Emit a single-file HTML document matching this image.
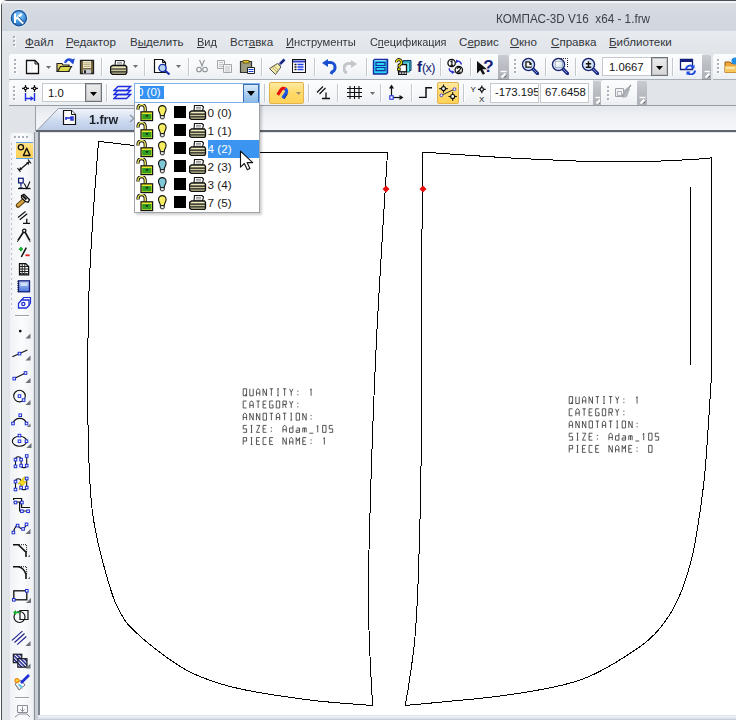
<!DOCTYPE html>
<html><head><meta charset="utf-8">
<style>
*{margin:0;padding:0;box-sizing:border-box}
html,body{width:736px;height:720px;overflow:hidden;background:#fff}
body{position:relative;font-family:"Liberation Sans",sans-serif;font-size:12px;color:#1e1e1e}
.a{position:absolute}
u{text-decoration:underline;text-underline-offset:1px}
</style></head><body>
<div class="a" style="left:0px;top:0px;width:736px;height:720px;background:#fff"></div>
<div class="a" style="left:1px;top:0px;width:740px;height:725px;background:#e1e4e8;border-top:1px solid #4a4e55;border-left:1px solid #4a4e55;border-top-left-radius:6px"></div>
<div class="a" style="left:2px;top:1px;width:736px;height:2px;background:#f2f4f7;border-top-left-radius:5px"></div>
<div class="a" style="left:2px;top:3px;width:736px;height:28px;background:linear-gradient(#d9dde3,#d3d8df 50%,#d1d7de)"></div>
<svg class="a" style="left:8px;top:7px" width="22" height="22" viewBox="0 0 22 22"><defs><radialGradient id="lgb" cx=".5" cy=".35" r=".7"><stop offset="0" stop-color="#8fd6fb"/><stop offset=".6" stop-color="#3f92dc"/><stop offset="1" stop-color="#1d5aa6"/></radialGradient></defs><circle cx="11" cy="11.2" r="9.6" fill="#d8ecfa" opacity=".6"/><circle cx="10.9" cy="11.2" r="7.6" fill="url(#lgb)" stroke="#1a4f98" stroke-width="1.2"/><path d="M7 6.5v9.5" stroke="#fff" stroke-width="2"/><path d="M8 12L13.8 6.8" stroke="#fff" stroke-width="2.2"/><path d="M9.6 10.4l5.6 6" stroke="#fff" stroke-width="2.2"/><path d="M10.4 9.6l5.4 5.8" stroke="#123f80" stroke-width="1"/></svg>
<div class="a" style="left:496px;top:12px;white-space:pre;font-size:12px;color:#3b4047;transform-origin:0 0;transform:scaleX(.975)">КОМПАС-3D V16  x64 - 1.frw</div>
<div class="a" style="left:2px;top:31px;width:736px;height:23px;background:linear-gradient(#e8ebef,#e0e4e9)"></div>
<div class="a" style="left:13px;top:36px;width:2px;height:2px;background:#aab1bb;box-shadow:1px 1px 0 #fff"></div>
<div class="a" style="left:13px;top:40px;width:2px;height:2px;background:#aab1bb;box-shadow:1px 1px 0 #fff"></div>
<div class="a" style="left:13px;top:44px;width:2px;height:2px;background:#aab1bb;box-shadow:1px 1px 0 #fff"></div>
<div class="a" style="left:25px;top:35px;white-space:pre;font-size:11.6px;color:#33373d;transform-origin:0 0;transform:scaleX(1)"><u>Ф</u>айл</div>
<div class="a" style="left:66px;top:35px;white-space:pre;font-size:11.6px;color:#33373d;transform-origin:0 0;transform:scaleX(1)"><u>Р</u>едактор</div>
<div class="a" style="left:130px;top:35px;white-space:pre;font-size:11.6px;color:#33373d;transform-origin:0 0;transform:scaleX(1)">В<u>ы</u>делить</div>
<div class="a" style="left:197px;top:35px;white-space:pre;font-size:11.6px;color:#33373d;transform-origin:0 0;transform:scaleX(0.95)"><u>В</u>ид</div>
<div class="a" style="left:230px;top:35px;white-space:pre;font-size:11.6px;color:#33373d;transform-origin:0 0;transform:scaleX(1)">Вст<u>а</u>вка</div>
<div class="a" style="left:286px;top:35px;white-space:pre;font-size:11.6px;color:#33373d;transform-origin:0 0;transform:scaleX(0.965)"><u>И</u>нструменты</div>
<div class="a" style="left:370px;top:35px;white-space:pre;font-size:11.6px;color:#33373d;transform-origin:0 0;transform:scaleX(0.94)">С<u>п</u>ецификация</div>
<div class="a" style="left:459px;top:35px;white-space:pre;font-size:11.6px;color:#33373d;transform-origin:0 0;transform:scaleX(1)">С<u>е</u>рвис</div>
<div class="a" style="left:510px;top:35px;white-space:pre;font-size:11.6px;color:#33373d;transform-origin:0 0;transform:scaleX(1)"><u>О</u>кно</div>
<div class="a" style="left:551px;top:35px;white-space:pre;font-size:11.6px;color:#33373d;transform-origin:0 0;transform:scaleX(1)"><u>С</u>правка</div>
<div class="a" style="left:609px;top:35px;white-space:pre;font-size:11.6px;color:#33373d;transform-origin:0 0;transform:scaleX(1)"><u>Б</u>иблиотеки</div>
<div class="a" style="left:9px;top:54px;width:490px;height:26px;background:linear-gradient(#fbfcfd,#f5f7f9 55%,#eceff3);border-radius:3px 0 0 0;box-shadow:inset 0 -1px 0 #a9afb7"></div>
<div class="a" style="left:498px;top:55px;width:11px;height:25px;background:linear-gradient(#c9ccd1,#b9bdc3 45%,#adb1b7);border-radius:0 2px 0 0;box-shadow:inset 0 -1px 0 #8f949b"></div>
<svg class="a" style="left:499px;top:70px" width="9" height="9" viewBox="0 0 9 9"><path d="M1.5 1.5h6" stroke="#fff" stroke-width="1.4"/><path d="M2.5 7.5l4-4" stroke="#fff" stroke-width="2"/><path d="M5.5 7.5l2-2" stroke="#555" stroke-width="1"/></svg>
<div class="a" style="left:509px;top:54px;width:194px;height:26px;background:linear-gradient(#fbfcfd,#f5f7f9 55%,#eceff3);border-radius:3px 0 0 0;box-shadow:inset 0 -1px 0 #a9afb7"></div>
<div class="a" style="left:702px;top:55px;width:9px;height:25px;background:linear-gradient(#c9ccd1,#b9bdc3 45%,#adb1b7);border-radius:0 2px 0 0;box-shadow:inset 0 -1px 0 #8f949b"></div>
<svg class="a" style="left:703px;top:70px" width="7" height="9" viewBox="0 0 7 9"><path d="M1.5 1.5h6" stroke="#fff" stroke-width="1.4"/><path d="M2.5 7.5l4-4" stroke="#fff" stroke-width="2"/><path d="M5.5 7.5l2-2" stroke="#555" stroke-width="1"/></svg>
<div class="a" style="left:713px;top:54px;width:30px;height:26px;background:linear-gradient(#fbfcfd,#f5f7f9 55%,#eceff3);border-radius:3px 0 0 0;box-shadow:inset 0 -1px 0 #a9afb7"></div>
<div class="a" style="left:14px;top:59px;width:2px;height:2px;background:#aab1bb;box-shadow:1px 1px 0 #fff"></div>
<div class="a" style="left:14px;top:63px;width:2px;height:2px;background:#aab1bb;box-shadow:1px 1px 0 #fff"></div>
<div class="a" style="left:14px;top:67px;width:2px;height:2px;background:#aab1bb;box-shadow:1px 1px 0 #fff"></div>
<div class="a" style="left:14px;top:71px;width:2px;height:2px;background:#aab1bb;box-shadow:1px 1px 0 #fff"></div>
<div class="a" style="left:514px;top:59px;width:2px;height:2px;background:#aab1bb;box-shadow:1px 1px 0 #fff"></div>
<div class="a" style="left:514px;top:63px;width:2px;height:2px;background:#aab1bb;box-shadow:1px 1px 0 #fff"></div>
<div class="a" style="left:514px;top:67px;width:2px;height:2px;background:#aab1bb;box-shadow:1px 1px 0 #fff"></div>
<div class="a" style="left:514px;top:71px;width:2px;height:2px;background:#aab1bb;box-shadow:1px 1px 0 #fff"></div>
<div class="a" style="left:717px;top:59px;width:2px;height:2px;background:#aab1bb;box-shadow:1px 1px 0 #fff"></div>
<div class="a" style="left:717px;top:63px;width:2px;height:2px;background:#aab1bb;box-shadow:1px 1px 0 #fff"></div>
<div class="a" style="left:717px;top:67px;width:2px;height:2px;background:#aab1bb;box-shadow:1px 1px 0 #fff"></div>
<div class="a" style="left:717px;top:71px;width:2px;height:2px;background:#aab1bb;box-shadow:1px 1px 0 #fff"></div>
<div class="a" style="left:101px;top:58px;width:1px;height:18px;background:#c3c8cf;box-shadow:1px 0 0 #fff"></div>
<div class="a" style="left:144px;top:58px;width:1px;height:18px;background:#c3c8cf;box-shadow:1px 0 0 #fff"></div>
<div class="a" style="left:188px;top:58px;width:1px;height:18px;background:#c3c8cf;box-shadow:1px 0 0 #fff"></div>
<div class="a" style="left:261px;top:58px;width:1px;height:18px;background:#c3c8cf;box-shadow:1px 0 0 #fff"></div>
<div class="a" style="left:314px;top:58px;width:1px;height:18px;background:#c3c8cf;box-shadow:1px 0 0 #fff"></div>
<div class="a" style="left:366px;top:58px;width:1px;height:18px;background:#c3c8cf;box-shadow:1px 0 0 #fff"></div>
<div class="a" style="left:440px;top:58px;width:1px;height:18px;background:#c3c8cf;box-shadow:1px 0 0 #fff"></div>
<div class="a" style="left:470px;top:58px;width:1px;height:18px;background:#c3c8cf;box-shadow:1px 0 0 #fff"></div>
<div class="a" style="left:545px;top:58px;width:1px;height:18px;background:#c3c8cf;box-shadow:1px 0 0 #fff"></div>
<div class="a" style="left:575px;top:58px;width:1px;height:18px;background:#c3c8cf;box-shadow:1px 0 0 #fff"></div>
<div class="a" style="left:672px;top:58px;width:1px;height:18px;background:#c3c8cf;box-shadow:1px 0 0 #fff"></div>
<svg class="a" style="left:25px;top:59px" width="15" height="16" viewBox="0 0 15 16"><path d="M1.5 1.5h8.5l3.5 3.5v9.5h-12z" fill="#fff" stroke="#111" stroke-width="1.3"/><path d="M10 1.5v3.5h3.5" fill="none" stroke="#111" stroke-width="1"/><path d="M4 4v9M7 4v9" stroke="#e6e9f4" stroke-width="1"/></svg>
<svg class="a" style="left:46px;top:66px" width="5" height="3" viewBox="0 0 5 3"><path d="M0 0h5L2.5 3z" fill="#6b6f75"/></svg>
<svg class="a" style="left:56px;top:57px" width="19" height="16" viewBox="0 0 19 16"><path d="M1 6.5h5l1 1.5h6v6.5H1z" fill="#e9d36a" stroke="#222" stroke-width="1.2"/><path d="M1.5 14.5l3-5h11l-3 5z" fill="#d8d84a" stroke="#222" stroke-width="1.2"/><path d="M9 5.8Q11 1 15.5 2.8" fill="none" stroke="#1e46d8" stroke-width="2.2"/><path d="M12.8 3.2L18.8 1.6 17.2 7.6z" fill="#1e46d8"/></svg>
<svg class="a" style="left:79px;top:59px" width="16" height="16" viewBox="0 0 16 16"><path d="M1.5 1.5h13v13h-13z" fill="#7a6a40" stroke="#222" stroke-width="1.3"/><path d="M4 2h8v7H4z" fill="#f2ead0"/><path d="M4.5 3.8h7M4.5 5.6h7M4.5 7.4h7" stroke="#a89868" stroke-width=".8"/><path d="M4 10.5h8v4H4z" fill="#c9ccd2"/><path d="M5 11.3h2v3H5z" fill="#222"/></svg>
<svg class="a" style="left:110px;top:60px" width="18" height="15" viewBox="0 0 18 15"><path d="M5.5 .5h8l1 1-1 4.5H5z" fill="#fff" stroke="#222" stroke-width="1.1"/><path d="M7 2.3h5M7 3.9h5" stroke="#666" stroke-width=".7"/><path d="M2.5 5.5h13l1.3 1.5v5.5l-1.3 2h-13l-2-2V7z" fill="#c9c596" stroke="#111" stroke-width="1.3"/><path d="M.8 9h16M.8 11.8h16" stroke="#222" stroke-width="1.2"/><path d="M2.5 7.3h12.5" stroke="#f6f2cf" stroke-width="1"/></svg>
<svg class="a" style="left:133px;top:65px" width="5" height="3" viewBox="0 0 5 3"><path d="M0 0h5L2.5 3z" fill="#6b6f75"/></svg>
<svg class="a" style="left:153px;top:58px" width="19" height="17" viewBox="0 0 19 17"><path d="M1.5 1.5h8l3 3v10h-11z" fill="#fff" stroke="#111" stroke-width="1.2"/><path d="M9.5 1.5v3h3" fill="none" stroke="#111"/><circle cx="9.5" cy="10" r="3.6" fill="#bcd6f2" stroke="#1a2fa8" stroke-width="1.4"/><path d="M12 12.5l4.5 4" stroke="#1a2fa8" stroke-width="2.2"/></svg>
<svg class="a" style="left:176px;top:65px" width="5" height="3" viewBox="0 0 5 3"><path d="M0 0h5L2.5 3z" fill="#6b6f75"/></svg>
<svg class="a" style="left:196px;top:59px" width="12" height="14" viewBox="0 0 12 14"><path d="M3.5 1l3 6.5M8.5 1l-3 6.5" stroke="#8f9499" stroke-width="1.1" fill="none"/><circle cx="3" cy="10.5" r="2.3" fill="none" stroke="#8f9499" stroke-width="1.1"/><circle cx="9" cy="10.5" r="2.3" fill="none" stroke="#8f9499" stroke-width="1.1"/></svg>
<svg class="a" style="left:216px;top:60px" width="17" height="13" viewBox="0 0 17 13"><path d="M1.5 .5h7v8h-7z" fill="#f4f4f4" stroke="#a3a6aa"/><path d="M3 2.5h4M3 4.5h4M3 6.5h4" stroke="#b5b8bc" stroke-width=".8"/><path d="M7.5 4.5h8v8h-8z" fill="#f4f4f4" stroke="#a3a6aa"/><path d="M9 7h5M9 9h5M9 11h5" stroke="#b5b8bc" stroke-width=".8"/></svg>
<svg class="a" style="left:239px;top:59px" width="17" height="15" viewBox="0 0 17 15"><path d="M1.5 2.5h11v11h-11z" fill="#9d9c80" stroke="#333" stroke-width="1.2"/><path d="M4 1.5h6v2.5H4z" fill="#f0c830" stroke="#6b5a10" stroke-width="1"/><path d="M8.5 8.5h7v6h-7z" fill="#fff" stroke="#222" stroke-width="1"/><path d="M9.5 10.5h5M9.5 12.5h5" stroke="#1f3fd0" stroke-width="1"/></svg>
<svg class="a" style="left:268px;top:58px" width="18" height="17" viewBox="0 0 18 17"><path d="M16.5 1.5l-6 6" stroke="#1b2a8a" stroke-width="2.6"/><path d="M11.5 5l2 2-2 1.5-2-2z" fill="#8a9ab0"/><path d="M9.5 5.5l3.5 3.5-5.5 7.5-6-6z" fill="#f4e9a8" stroke="#555" stroke-width="1"/><path d="M4 9l5 5M5.5 7.5l5 5" stroke="#a9a060" stroke-width=".8"/></svg>
<svg class="a" style="left:292px;top:59px" width="14" height="14" viewBox="0 0 14 14"><path d="M.5 .5h13v13H.5z" fill="#fff" stroke="#111" stroke-width="1.1"/><path d="M1 1.5h12v2H1z" fill="#3040c8"/><path d="M2.5 5.5h2M2.5 8h2M2.5 10.5h2" stroke="#111" stroke-width="1.4"/><path d="M5.5 5.5h6M5.5 8h6M5.5 10.5h6" stroke="#1f3fe0" stroke-width="1.4"/></svg>
<svg class="a" style="left:321px;top:59px" width="16" height="16" viewBox="0 0 16 16"><path d="M7 3.5h2.5a4.5 4.5 0 0 1 4.5 4.5v1a4.5 4.5 0 0 1-3 4l-1 2" fill="none" stroke="#1a4fd0" stroke-width="3"/><path d="M1 4l6-4v8z" fill="#1a4fd0"/></svg>
<svg class="a" style="left:343px;top:60px" width="15" height="14" viewBox="0 0 15 14"><path d="M8 3.5H5.5A4.5 4.5 0 0 0 1 8v1a4.5 4.5 0 0 0 3 4" fill="none" stroke="#c3c6ca" stroke-width="3"/><path d="M14 4L8 0v8z" fill="#c3c6ca"/></svg>
<svg class="a" style="left:372px;top:58px" width="17" height="17" viewBox="0 0 17 17"><path d="M.8 2.2L2.5.8h13.7v14.5l-1.6 1.4H.8z" fill="#1a2aa0"/><path d="M2.2 2.2h12.4v13H2.2z" fill="#27d6f2"/><path d="M4 4.3h9v3.2H4zM4 9.5h9v3.2H4z" fill="#27d6f2" stroke="#1a2aa0" stroke-width="1.2"/><path d="M2.6 2.6h11.5" stroke="#a8f2ff" stroke-width=".8"/></svg>
<svg class="a" style="left:394px;top:58px" width="18" height="18" viewBox="0 0 18 18"><path d="M9.5 2.5h7.5v10h-7.5z" fill="#2ac8e0" stroke="#1b2f6a" stroke-width="1"/><path d="M8 4h7.5v10H8z" fill="#6fe6f4" stroke="#197a8a" stroke-width="1"/><path d="M4.5 6.5h8v7.5h-8z" fill="#fff" stroke="#111" stroke-width="1.3"/><path d="M4 13.5h9v3.5H4z" fill="#111"/><path d="M5.2 14.6h2v1.2h-2zM7.8 14.6h2v1.2h-2zM10.4 14.6h2v1.2h-2z" fill="#fff"/><path d="M2.3 4.2a2.6 2.6 0 1 1 3.9 2.3c-.9.6-1.3 1-1.3 2.3" fill="none" stroke="#111" stroke-width="3"/><path d="M2.3 4.2a2.6 2.6 0 1 1 3.9 2.3c-.9.6-1.3 1-1.3 2.3" fill="none" stroke="#f6e400" stroke-width="1.4"/><rect x="3.6" y="10" width="2.6" height="2.4" fill="#f6e400" stroke="#111" stroke-width=".8"/></svg>
<div class="a" style="left:417px;top:58px;white-space:pre;color:#131c72"><b style="font-size:15px">f</b><span style="font-size:12.5px;letter-spacing:-.6px">(x)</span></div>
<svg class="a" style="left:447px;top:58px" width="18" height="18" viewBox="0 0 18 18"><circle cx="4.6" cy="5" r="3.7" fill="#fff" stroke="#111" stroke-width="1.3"/><path d="M3.5 3.9l1.4-1v4.3M3.3 7.3h3" fill="none" stroke="#111" stroke-width="1.2"/><circle cx="11.8" cy="12" r="3.7" fill="#fff" stroke="#111" stroke-width="1.3"/><path d="M10.1 10.9q.3-1.6 1.8-1.6 1.7 0 1.6 1.5-.1 1-3.4 3.4h3.6" fill="none" stroke="#111" stroke-width="1.2"/><path d="M10 3.2q3.5-.5 4.5 3.3" fill="none" stroke="#2a2fd0" stroke-width="1.4"/><path d="M9 1.5l3 1.8-3 1.9z" fill="#2a2fd0"/><path d="M2.2 10.2q.2 3.8 4.2 4" fill="none" stroke="#2a2fd0" stroke-width="1.4"/><path d="M7.8 14.2l-3 1.8v-3.7z" fill="#2a2fd0"/></svg>
<svg class="a" style="left:476px;top:59px" width="18" height="16" viewBox="0 0 18 16"><path d="M1 2v12.5l3.2-3.2 2.6 4.5 2.2-1.2-2.5-4.3h4.5z" fill="#111"/><text x="7.2" y="13" font-family="Liberation Sans" font-weight="bold" font-size="17" fill="#16227a">?</text></svg>
<svg class="a" style="left:521px;top:57px" width="18" height="18" viewBox="0 0 18 18"><defs><radialGradient id="mg" cx=".4" cy=".35" r=".7"><stop offset="0" stop-color="#fff"/><stop offset="1" stop-color="#b9d2f0"/></radialGradient></defs><path d="M11.5 11.5l5 5" stroke="#1c2a80" stroke-width="3.2" stroke-linecap="round"/><path d="M12 12l4 4" stroke="#7f8fd8" stroke-width="1"/><circle cx="7.5" cy="7.5" r="6" fill="url(#mg)" stroke="#1a2470" stroke-width="1.5"/><circle cx="7.5" cy="7.5" r="4.6" fill="none" stroke="#cfe0f7" stroke-width="1"/><path d="M4.3 4.3h4.2l2 2v4.5H4.3z" fill="#111"/><path d="M5.6 5.6h2.2l.6.6v1.9h2v1.5H5.6z" fill="#fff"/></svg>
<svg class="a" style="left:551px;top:57px" width="18" height="18" viewBox="0 0 18 18"><defs><radialGradient id="mg" cx=".4" cy=".35" r=".7"><stop offset="0" stop-color="#fff"/><stop offset="1" stop-color="#b9d2f0"/></radialGradient></defs><path d="M11.5 11.5l5 5" stroke="#1c2a80" stroke-width="3.2" stroke-linecap="round"/><path d="M12 12l4 4" stroke="#7f8fd8" stroke-width="1"/><circle cx="7.5" cy="7.5" r="6" fill="url(#mg)" stroke="#1a2470" stroke-width="1.5"/><circle cx="7.5" cy="7.5" r="4.6" fill="none" stroke="#cfe0f7" stroke-width="1"/><path d="M8 1.5h8.5v9" fill="none" stroke="#222" stroke-width="1" stroke-dasharray="1 1"/><path d="M4.5 4.5h7v6h-7z" fill="none" stroke="#333" stroke-width=".8" stroke-dasharray="1 1" opacity=".7"/></svg>
<svg class="a" style="left:581px;top:57px" width="18" height="18" viewBox="0 0 18 18"><defs><radialGradient id="mg" cx=".4" cy=".35" r=".7"><stop offset="0" stop-color="#fff"/><stop offset="1" stop-color="#b9d2f0"/></radialGradient></defs><path d="M11.5 11.5l5 5" stroke="#1c2a80" stroke-width="3.2" stroke-linecap="round"/><path d="M12 12l4 4" stroke="#7f8fd8" stroke-width="1"/><circle cx="7.5" cy="7.5" r="6" fill="url(#mg)" stroke="#1a2470" stroke-width="1.5"/><circle cx="7.5" cy="7.5" r="4.6" fill="none" stroke="#cfe0f7" stroke-width="1"/><path d="M4.8 6.8h5.4M7.5 4.2v5.2M4.8 10.2h5.4" stroke="#111" stroke-width="1.5"/></svg>
<div class="a" style="left:602px;top:57px;width:66px;height:19px;background:#fff;border:1px solid #c5c9cf"></div>
<div class="a" style="left:651px;top:57px;width:17px;height:19px;background:linear-gradient(#ececec,#d6d6d6);border:1px solid #6f7277;box-shadow:inset 0 0 0 1px #bfc2c6"></div>
<svg class="a" style="left:656px;top:66px" width="7" height="4" viewBox="0 0 7 4"><path d="M0 0h7L3.5 4z" fill="#000"/></svg>
<div class="a" style="left:609px;top:61px;white-space:pre;font-size:11.3px;color:#141414">1.0667</div>
<svg class="a" style="left:679px;top:58px" width="18" height="17" viewBox="0 0 18 17"><path d="M1.5 1.5h12v10h-12z" fill="#fff" stroke="#14207a" stroke-width="1.3"/><path d="M1.5 1.5h12v2.5h-12z" fill="#14207a"/><path d="M7 11.5a4 4 0 0 1 7-2.5" fill="none" stroke="#1f4ce0" stroke-width="2"/><path d="M15.5 6.5v4h-4z" fill="#1f4ce0"/><path d="M16 12.5a4 4 0 0 1-7 2.5" fill="none" stroke="#1f4ce0" stroke-width="2"/><path d="M7.5 17.5v-4h4z" fill="#1f4ce0"/></svg>
<svg class="a" style="left:724px;top:57px" width="12" height="18" viewBox="0 0 12 18"><path d="M1 5h5l1 1.5h6v9H1z" fill="#f2a63a" stroke="#9a5a10" stroke-width="1"/><path d="M1 9h12v6.5H1z" fill="#f8c860"/><path d="M2 11h9" stroke="#fff" stroke-width="1"/><circle cx="11" cy="4" r="3.6" fill="#1f8ee0"/></svg>
<div class="a" style="left:9px;top:80px;width:584px;height:26px;background:linear-gradient(#fbfcfd,#f5f7f9 55%,#eceff3);border-radius:3px 0 0 0;box-shadow:inset 0 -1px 0 #a9afb7"></div>
<div class="a" style="left:593px;top:81px;width:8px;height:25px;background:linear-gradient(#c9ccd1,#b9bdc3 45%,#adb1b7);border-radius:0 2px 0 0;box-shadow:inset 0 -1px 0 #8f949b"></div>
<svg class="a" style="left:594px;top:96px" width="6" height="9" viewBox="0 0 6 9"><path d="M1.5 1.5h6" stroke="#fff" stroke-width="1.4"/><path d="M2.5 7.5l4-4" stroke="#fff" stroke-width="2"/><path d="M5.5 7.5l2-2" stroke="#555" stroke-width="1"/></svg>
<div class="a" style="left:601px;top:80px;width:37px;height:26px;background:linear-gradient(#fbfcfd,#f5f7f9 55%,#eceff3);border-radius:3px 0 0 0;box-shadow:inset 0 -1px 0 #a9afb7"></div>
<div class="a" style="left:637px;top:81px;width:10px;height:25px;background:linear-gradient(#c9ccd1,#b9bdc3 45%,#adb1b7);border-radius:0 2px 0 0;box-shadow:inset 0 -1px 0 #8f949b"></div>
<svg class="a" style="left:638px;top:96px" width="8" height="9" viewBox="0 0 8 9"><path d="M1.5 1.5h6" stroke="#fff" stroke-width="1.4"/><path d="M2.5 7.5l4-4" stroke="#fff" stroke-width="2"/><path d="M5.5 7.5l2-2" stroke="#555" stroke-width="1"/></svg>
<div class="a" style="left:13px;top:86px;width:2px;height:2px;background:#aab1bb;box-shadow:1px 1px 0 #fff"></div>
<div class="a" style="left:13px;top:90px;width:2px;height:2px;background:#aab1bb;box-shadow:1px 1px 0 #fff"></div>
<div class="a" style="left:13px;top:94px;width:2px;height:2px;background:#aab1bb;box-shadow:1px 1px 0 #fff"></div>
<div class="a" style="left:13px;top:98px;width:2px;height:2px;background:#aab1bb;box-shadow:1px 1px 0 #fff"></div>
<div class="a" style="left:607px;top:86px;width:2px;height:2px;background:#aab1bb;box-shadow:1px 1px 0 #fff"></div>
<div class="a" style="left:607px;top:90px;width:2px;height:2px;background:#aab1bb;box-shadow:1px 1px 0 #fff"></div>
<div class="a" style="left:607px;top:94px;width:2px;height:2px;background:#aab1bb;box-shadow:1px 1px 0 #fff"></div>
<div class="a" style="left:607px;top:98px;width:2px;height:2px;background:#aab1bb;box-shadow:1px 1px 0 #fff"></div>
<div class="a" style="left:106px;top:84px;width:1px;height:18px;background:#c3c8cf;box-shadow:1px 0 0 #fff"></div>
<div class="a" style="left:264px;top:84px;width:1px;height:18px;background:#c3c8cf;box-shadow:1px 0 0 #fff"></div>
<div class="a" style="left:308px;top:84px;width:1px;height:18px;background:#c3c8cf;box-shadow:1px 0 0 #fff"></div>
<div class="a" style="left:337px;top:84px;width:1px;height:18px;background:#c3c8cf;box-shadow:1px 0 0 #fff"></div>
<div class="a" style="left:380px;top:84px;width:1px;height:18px;background:#c3c8cf;box-shadow:1px 0 0 #fff"></div>
<div class="a" style="left:411px;top:84px;width:1px;height:18px;background:#c3c8cf;box-shadow:1px 0 0 #fff"></div>
<div class="a" style="left:463px;top:84px;width:1px;height:18px;background:#c3c8cf;box-shadow:1px 0 0 #fff"></div>
<svg class="a" style="left:21px;top:84px" width="18" height="18" viewBox="0 0 18 18"><path d="M1.0 4.4h7.0M4.5 0.9000000000000004v7.0" stroke="#111" stroke-width="1.2"/><circle cx="4.5" cy="4.4" r="1.3" fill="#fff" stroke="#111" stroke-width="1.2"/><path d="M10.0 4.4h7.0M13.5 0.9000000000000004v7.0" stroke="#111" stroke-width="1.2"/><circle cx="13.5" cy="4.4" r="1.3" fill="#fff" stroke="#111" stroke-width="1.2"/><path d="M4.5 9v8M13.5 9v8M5 14.5h6" stroke="#1f2fe0" stroke-width="1.4" fill="none"/><path d="M13 14.5l-3.5-2.5v5z" fill="#1f2fe0"/></svg>
<div class="a" style="left:42px;top:83px;width:60px;height:19px;background:#fff;border:1px solid #c5c9cf"></div>
<div class="a" style="left:85px;top:83px;width:17px;height:19px;background:linear-gradient(#ececec,#d6d6d6);border:1px solid #6f7277;box-shadow:inset 0 0 0 1px #bfc2c6"></div>
<svg class="a" style="left:90px;top:92px" width="7" height="4" viewBox="0 0 7 4"><path d="M0 0h7L3.5 4z" fill="#000"/></svg>
<div class="a" style="left:48px;top:87px;white-space:pre;font-size:11.3px;color:#141414">1.0</div>
<svg class="a" style="left:113px;top:85px" width="19" height="15" viewBox="0 0 19 15"><path d="M5 1.5h12.5l-4 4H1z" fill="none" stroke="#1c2ee0" stroke-width="1.3"/><path d="M5 5.5h12.5l-4 4H1z" fill="none" stroke="#1c2ee0" stroke-width="1.3"/><path d="M5 9.5h12.5l-4 4H1z" fill="none" stroke="#1c2ee0" stroke-width="1.3"/></svg>
<div class="a" style="left:134px;top:83px;width:126px;height:20px;background:#fff;border:1px solid #7fb0e6"></div>
<div class="a" style="left:140px;top:86px;width:24px;height:13px;background:#3391f2"></div>
<div class="a" style="left:137px;top:86px;white-space:pre;font-size:11.5px;width:27px;overflow:hidden"><span style="color:#fff">0 (0)</span></div>
<div class="a" style="left:243px;top:84px;width:16px;height:19px;background:linear-gradient(#dcebfa,#a9cdf1 55%,#8dbbe8);border:1px solid #3a6cb3"></div>
<svg class="a" style="left:247px;top:91px" width="8" height="5" viewBox="0 0 8 5"><path d="M0 0h8L4 5z" fill="#000"/></svg>
<div class="a" style="left:269px;top:82px;width:35px;height:22px;background:linear-gradient(#ffeaa0,#ffd968 50%,#ffd35a);border:1px solid #e2b24e;border-radius:2px"></div>
<svg class="a" style="left:272px;top:83px" width="24" height="20" viewBox="0 0 24 20"><g transform="translate(11.6 8.3) rotate(33)"><path d="M-3 6.2V0A3 3 0 0 1 0 -3" fill="none" stroke="#e3140e" stroke-width="3.2"/><path d="M0 -3A3 3 0 0 1 3 0V6.2" fill="none" stroke="#1d55e8" stroke-width="3.2"/><path d="M4.6 0V6.2" stroke="#0a1a6a" stroke-width=".8"/></g></svg>
<svg class="a" style="left:296px;top:92px" width="5" height="3" viewBox="0 0 5 3"><path d="M0 0h5L2.5 3z" fill="#9b8f70"/></svg>
<svg class="a" style="left:315px;top:85px" width="16" height="15" viewBox="0 0 16 15"><path d="M2 7.5L8 1.5M4.5 9L10.5 3" stroke="#111" stroke-width="1.2"/><path d="M7 13.5h8M11 7.5v6" stroke="#111" stroke-width="1.3"/></svg>
<svg class="a" style="left:346px;top:85px" width="17" height="15" viewBox="0 0 17 15"><path d="M1 3.5h15M1 7.5h15M1 11.5h15M4 1v13M8.5 1v13M13 1v13" stroke="#111" stroke-width="1.1"/></svg>
<svg class="a" style="left:370px;top:92px" width="5" height="3" viewBox="0 0 5 3"><path d="M0 0h5L2.5 3z" fill="#6b6f75"/></svg>
<svg class="a" style="left:387px;top:84px" width="17" height="16" viewBox="0 0 17 16"><path d="M4.5 14V2" stroke="#111" stroke-width="1.2"/><path d="M4.5 .5L2 4.5h5z" fill="#111"/><path d="M4.5 13.5H15" stroke="#111" stroke-width="1.2"/><path d="M16.5 13.5L12.5 11v5z" fill="#111"/><rect x="2.8" y="11.8" width="3.4" height="3.4" fill="#fff" stroke="#1f2fe0" stroke-width="1.1"/></svg>
<svg class="a" style="left:419px;top:87px" width="13" height="11" viewBox="0 0 13 11"><path d="M0 10.5h7V.8h6" fill="none" stroke="#111" stroke-width="1.5"/></svg>
<div class="a" style="left:437px;top:82px;width:22px;height:22px;background:linear-gradient(#ffeaa0,#ffd968 50%,#ffd35a);border:1px solid #e2b24e;border-radius:2px"></div>
<svg class="a" style="left:438px;top:83px" width="20" height="20" viewBox="0 0 20 20"><path d="M1.2999999999999998 5.6h8.4M5.5 1.3999999999999995v8.4" stroke="#111" stroke-width="1.2"/><circle cx="5.5" cy="5.6" r="2" fill="#fff" stroke="#111" stroke-width="1.2"/><path d="M10.5 13.5h8.4M14.7 9.3v8.4" stroke="#111" stroke-width="1.2"/><circle cx="14.7" cy="13.5" r="2" fill="#fff" stroke="#111" stroke-width="1.2"/><path d="M3.4 12.3L16.5 6.2" stroke="#333" stroke-width="1"/><circle cx="3.4" cy="12.3" r="1.4" fill="#fff" stroke="#4b3fd0" stroke-width="1"/><circle cx="16.5" cy="6.2" r="1.4" fill="#fff" stroke="#4b3fd0" stroke-width="1"/></svg>
<svg class="a" style="left:469px;top:84px" width="19" height="19" viewBox="0 0 19 19"><text x="1.5" y="8" font-family="Liberation Sans" font-size="8" fill="#111">Y</text><text x="10" y="17.5" font-family="Liberation Sans" font-size="8" fill="#111">X</text><path d="M8.9 5.4h7.800000000000001M12.8 1.5v7.800000000000001" stroke="#111" stroke-width="1.2"/><circle cx="12.8" cy="5.4" r="1.7" fill="#fff" stroke="#111" stroke-width="1.2"/></svg>
<div class="a" style="left:490px;top:83px;width:49px;height:20px;background:#fff;border:1px solid #c5c9cf"></div>
<div class="a" style="left:540px;top:83px;width:49px;height:20px;background:#fff;border:1px solid #c5c9cf"></div>
<div class="a" style="left:491px;top:86px;width:47px;height:14px;overflow:hidden"><div style="position:absolute;left:4px;top:0;white-space:pre;font-size:11.3px;color:#141414">-173.195</div></div>
<div class="a" style="left:545px;top:86px;white-space:pre;font-size:11.3px;color:#141414">67.6458</div>
<svg class="a" style="left:614px;top:84px" width="19" height="16" viewBox="0 0 19 16"><path d="M1.5 4.5h8v8h-8z" fill="#f2f2f2" stroke="#9ea2a8" stroke-width="1"/><path d="M3.5 7.5h4v4h-4z" fill="none" stroke="#b0b4b9"/><path d="M8 12l9-11" stroke="#8f939a" stroke-width="1.2"/><path d="M9 7l5-4 2 2-3 8-4 1z" fill="#a7abb1" opacity=".85"/></svg>
<div class="a" style="left:2px;top:106px;width:736px;height:26px;background:#e0e3e8"></div>
<div class="a" style="left:9px;top:105px;width:730px;height:1px;background:#979da5"></div>
<div class="a" style="left:35px;top:106px;width:705px;height:25px;background:linear-gradient(#e4e7ec,#eef0f4 40%,#f6f7f9);border-left:1px solid #9aa1aa"></div>
<svg class="a" style="left:37px;top:108px" width="120" height="23" viewBox="0 0 120 23"><defs><linearGradient id="tg" x1="0" y1="0" x2="0" y2="1"><stop offset="0" stop-color="#f2f5fa"/><stop offset=".3" stop-color="#dfe7f4"/><stop offset=".5" stop-color="#cfdcf0"/><stop offset="1" stop-color="#bac9e7"/></linearGradient></defs><path d="M0.5 22 L21.5 0.5 L120 0.5 V23 H0.5 Z" fill="url(#tg)" stroke="#939cab" stroke-width="1"/></svg>
<svg class="a" style="left:62px;top:109px" width="15" height="17" viewBox="0 0 15 17"><path d="M1.5 1.5h8l4 4v10h-12z" fill="#fff" stroke="#111" stroke-width="1.2"/><path d="M9.5 1.5v4h4" fill="#fff" stroke="#111" stroke-width="1"/><path d="M4 9h6M4 8v3M9 8h2v3H9z" stroke="#1f2fd0" stroke-width="1.5" fill="none"/></svg>
<div class="a" style="left:89px;top:113px;white-space:pre;font-weight:bold;font-size:12px;color:#1b1f2a;transform-origin:0 0;transform:scaleX(1.04)">1.frw</div>
<svg class="a" style="left:129px;top:114px" width="6" height="9" viewBox="0 0 6 9"><path d="M1 1l4 3.5L1 8" stroke="#8d949e" stroke-width="1.3" fill="none"/></svg>
<div class="a" style="left:36px;top:130px;width:704px;height:2px;background:#5f656d"></div>
<div class="a" style="left:3px;top:132px;width:35px;height:590px;background:#e1e4e8"></div>
<div class="a" style="left:10px;top:133px;width:23px;height:590px;background:linear-gradient(90deg,#f0f2f5,#fbfcfd 50%,#eef1f4);border-radius:3px 3px 0 0"></div>
<div class="a" style="left:34px;top:132px;width:1px;height:590px;background:#8a9099"></div>
<div class="a" style="left:35px;top:132px;width:3px;height:590px;background:#c9cfd7"></div>
<div class="a" style="left:38px;top:132px;width:2px;height:590px;background:#7f858e"></div>
<div class="a" style="left:14px;top:136px;width:2px;height:2px;background:#a9b0ba;box-shadow:1px 1px 0 #fff"></div>
<div class="a" style="left:18px;top:136px;width:2px;height:2px;background:#a9b0ba;box-shadow:1px 1px 0 #fff"></div>
<div class="a" style="left:22px;top:136px;width:2px;height:2px;background:#a9b0ba;box-shadow:1px 1px 0 #fff"></div>
<div class="a" style="left:26px;top:136px;width:2px;height:2px;background:#a9b0ba;box-shadow:1px 1px 0 #fff"></div>
<div class="a" style="left:11px;top:143px;width:1px;height:166px;background:repeating-linear-gradient(#b9bec6 0 2px,transparent 2px 5px)"></div>
<div class="a" style="left:16px;top:142px;width:17px;height:17px;background:linear-gradient(#ffe28a,#ffd865 50%,#ffd05a);border-top:1px solid #5d9fe4;border-bottom:1px solid #5d9fe4"></div>
<svg class="a" style="left:10px;top:135px" width="24" height="24" viewBox="0 0 24 24"><circle cx="10.9" cy="12.3" r="2.6" fill="none" stroke="#111" stroke-width="1.3"/><path d="M13.4 20.5h6.6l-3.3-7.3z" fill="none" stroke="#111" stroke-width="1.4" stroke-linejoin="round"/></svg>
<svg class="a" style="left:10px;top:154px" width="24" height="24" viewBox="0 0 24 24"><path d="M9 16.5L19.5 7.5" stroke="#111" stroke-width="1.2"/><path d="M7.5 14l3 4M18 5.5l3 4" stroke="#111" stroke-width="1.2"/><path d="M9 16.5l1-3.5 2.5 2.3zM19.5 7.5l-1 3.5-2.5-2.3z" fill="#111"/></svg>
<svg class="a" style="left:10px;top:172px" width="24" height="24" viewBox="0 0 24 24"><rect x="8.6" y="6.3" width="4.6" height="4.6" fill="#fff" stroke="#14207a" stroke-width="1.3"/><path d="M10.9 11v3.5" stroke="#14207a" stroke-width="1.3"/><path d="M8 16.5q3-3 6 0z" fill="#14207a"/><path d="M8 16.5h12.5" stroke="#111" stroke-width="1.3"/><path d="M14.3 11.5l2.5 5 3.2-7" fill="none" stroke="#111" stroke-width="1.1"/></svg>
<svg class="a" style="left:10px;top:189px" width="24" height="24" viewBox="0 0 24 24"><path d="M8 16.5l6.5-5.8" stroke="#5a3f10" stroke-width="4.6" stroke-linecap="round"/><path d="M8.2 16.2l6-5.3" stroke="#d8a840" stroke-width="2.6" stroke-linecap="round"/><path d="M11.5 6.5l2.5-1.3 5.5 5.5-1.3 2.5-2.5-.5-4-3.8z" fill="#fff" stroke="#111" stroke-width="1.3"/><path d="M12.3 6.3l4.2 4.2" stroke="#111" stroke-width="1.8"/></svg>
<svg class="a" style="left:10px;top:206px" width="24" height="24" viewBox="0 0 24 24"><path d="M8 11.5l7.5-6M9.7 13.7l7.5-6" stroke="#111" stroke-width="1.2"/><path d="M16.75 12.75v4.6M13 17.3h7" stroke="#111" stroke-width="1.3"/></svg>
<svg class="a" style="left:10px;top:224px" width="24" height="24" viewBox="0 0 24 24"><circle cx="14.25" cy="6.8" r="1.7" fill="#fff" stroke="#111" stroke-width="1.3"/><path d="M13.3 8.3L8 16.4M15.2 8.3l4.5 8.1" stroke="#111" stroke-width="1.7"/><path d="M8 16.4l-.5 1.5M19.7 16.4l.3 1.5" stroke="#111" stroke-width="1"/></svg>
<svg class="a" style="left:10px;top:241px" width="24" height="24" viewBox="0 0 24 24"><path d="M8.8 8.2h4.2M10.9 6.1v4.2" stroke="#18b030" stroke-width="1.8"/><path d="M11.3 16l5-9.4" stroke="#111" stroke-width="1.5"/><path d="M15.4 14.3h4.2" stroke="#e82020" stroke-width="1.8"/></svg>
<svg class="a" style="left:10px;top:258px" width="24" height="24" viewBox="0 0 24 24"><path d="M9.5 5.7h6.2l2.9 2.9v8.2H9.5z" fill="#fff" stroke="#111" stroke-width="1.3"/><path d="M9.5 8.5h9M9.5 11h9M9.5 13.5h9M12.2 5.7v11M14.8 5.7v11" stroke="#111" stroke-width=".9"/><path d="M9.5 15.7h9" stroke="#111" stroke-width="1.6" stroke-dasharray="2 1"/></svg>
<svg class="a" style="left:10px;top:275px" width="24" height="24" viewBox="0 0 24 24"><rect x="8.5" y="5.8" width="11" height="11" fill="url(#bpg)" stroke="#14207a" stroke-width="1.3"/><defs><linearGradient id="bpg" x1="0" y1="0" x2="0" y2="1"><stop offset="0" stop-color="#b8cdf8"/><stop offset="1" stop-color="#4a78e0"/></linearGradient></defs><path d="M10.5 8h7v3h-7z" fill="#dfe8fb" opacity=".8"/><path d="M8 6v11" stroke="#111" stroke-width="1" stroke-dasharray="1 1"/></svg>
<svg class="a" style="left:10px;top:291px" width="24" height="24" viewBox="0 0 24 24"><path d="M8.5 12.5l3-3.5h7.5v5.5l-2.5 2.5h-8z" fill="#fff" stroke="#1f2fd6" stroke-width="1.3"/><path d="M11.5 9l2.2-2.5h6.8v5.5l-1.5 2.5" fill="none" stroke="#1f2fd6" stroke-width="1.2"/><circle cx="13.3" cy="13" r="1.6" fill="none" stroke="#1f2fd6" stroke-width="1.3"/></svg>
<div class="a" style="left:15px;top:315px;width:14px;height:1px;background:#9ba1a9;box-shadow:0 1px 0 #fff"></div>
<svg class="a" style="left:10px;top:320px" width="24" height="24" viewBox="0 0 24 24"><circle cx="10.25" cy="11.1" r="1.4" fill="#111"/><path d="M15.5 18.6h5v-5z" fill="#6b6f76"/></svg>
<svg class="a" style="left:10px;top:342px" width="24" height="24" viewBox="0 0 24 24"><path d="M2.4 14.75L17.4 7.9" stroke="#111" stroke-width="1.1"/><rect x="8.2" y="10.299999999999999" width="2.6" height="2.6" fill="#fff" stroke="#1f2fd6" stroke-width="1"/><path d="M15.5 18.5h5v-5z" fill="#6b6f76"/></svg>
<svg class="a" style="left:10px;top:364px" width="24" height="24" viewBox="0 0 24 24"><path d="M4.25 14.6L15.5 9" stroke="#111" stroke-width="1.1"/><rect x="2.95" y="13.299999999999999" width="2.6" height="2.6" fill="#fff" stroke="#1f2fd6" stroke-width="1"/><rect x="14.2" y="7.7" width="2.6" height="2.6" fill="#fff" stroke="#1f2fd6" stroke-width="1"/><path d="M15.5 19h5v-5z" fill="#6b6f76"/></svg>
<svg class="a" style="left:10px;top:384px" width="24" height="24" viewBox="0 0 24 24"><circle cx="9.5" cy="12.1" r="5.8" fill="none" stroke="#111" stroke-width="1.1"/><rect x="8.2" y="10.799999999999999" width="2.6" height="2.6" fill="#fff" stroke="#1f2fd6" stroke-width="1"/><rect x="12.299999999999999" y="14.8" width="2.6" height="2.6" fill="#fff" stroke="#1f2fd6" stroke-width="1"/><path d="M15.5 21h5v-5z" fill="#6b6f76"/></svg>
<svg class="a" style="left:10px;top:405px" width="24" height="24" viewBox="0 0 24 24"><path d="M3 18.5A7 7 0 0 1 16.5 18.5" fill="none" stroke="#111" stroke-width="1.1"/><rect x="1.7" y="17.2" width="2.6" height="2.6" fill="#fff" stroke="#1f2fd6" stroke-width="1"/><rect x="8.95" y="8.899999999999999" width="2.6" height="2.6" fill="#fff" stroke="#1f2fd6" stroke-width="1"/><rect x="15.2" y="17.2" width="2.6" height="2.6" fill="#fff" stroke="#1f2fd6" stroke-width="1"/><path d="M17 22h3.5v-3.5z" fill="#6b6f76"/></svg>
<svg class="a" style="left:10px;top:425px" width="24" height="24" viewBox="0 0 24 24"><ellipse cx="9.5" cy="16.25" rx="7.2" ry="5" fill="none" stroke="#111" stroke-width="1.1"/><rect x="8.2" y="9.299999999999999" width="2.6" height="2.6" fill="#fff" stroke="#1f2fd6" stroke-width="1"/><rect x="8.2" y="14.95" width="2.6" height="2.6" fill="#fff" stroke="#1f2fd6" stroke-width="1"/><rect x="15.2" y="14.95" width="2.6" height="2.6" fill="#fff" stroke="#1f2fd6" stroke-width="1"/><path d="M16.5 23h5v-5z" fill="#6b6f76"/></svg>
<svg class="a" style="left:10px;top:446px" width="24" height="24" viewBox="0 0 24 24"><path d="M5.5 21.5V13.5a2.8 2.8 0 0 1 5.6 0v5.5a2.8 2.8 0 0 0 5.6 0V10" fill="none" stroke="#111" stroke-width="1.1"/><rect x="4.2" y="19.099999999999998" width="2.6" height="2.6" fill="#fff" stroke="#1f2fd6" stroke-width="1"/><rect x="4.2" y="12.299999999999999" width="2.6" height="2.6" fill="#fff" stroke="#1f2fd6" stroke-width="1"/><rect x="9.799999999999999" y="12.299999999999999" width="2.6" height="2.6" fill="#fff" stroke="#1f2fd6" stroke-width="1"/><rect x="9.799999999999999" y="18.3" width="2.6" height="2.6" fill="#fff" stroke="#1f2fd6" stroke-width="1"/><rect x="15.399999999999999" y="18.3" width="2.6" height="2.6" fill="#fff" stroke="#1f2fd6" stroke-width="1"/><rect x="15.399999999999999" y="8.7" width="2.6" height="2.6" fill="#fff" stroke="#1f2fd6" stroke-width="1"/></svg>
<svg class="a" style="left:10px;top:468px" width="24" height="24" viewBox="0 0 24 24"><path d="M5.5 21.5V13.5a2.8 2.8 0 0 1 5.6 0v5.5a2.8 2.8 0 0 0 5.6 0V10" fill="none" stroke="#111" stroke-width="1.1"/><path d="M14 9l-6 7h3.5l-2.5 6 7.5-8.5h-3.5l2.5-4.5z" fill="#f6e020" stroke="#c8a800" stroke-width=".6"/><rect x="4.2" y="20.2" width="2.6" height="2.6" fill="#fff" stroke="#1f2fd6" stroke-width="1"/><rect x="4.2" y="12.299999999999999" width="2.6" height="2.6" fill="#fff" stroke="#1f2fd6" stroke-width="1"/><rect x="15.399999999999999" y="18.3" width="2.6" height="2.6" fill="#fff" stroke="#1f2fd6" stroke-width="1"/><rect x="15.399999999999999" y="9.2" width="2.6" height="2.6" fill="#fff" stroke="#1f2fd6" stroke-width="1"/><rect x="9.799999999999999" y="18.3" width="2.6" height="2.6" fill="#fff" stroke="#1f2fd6" stroke-width="1"/></svg>
<svg class="a" style="left:10px;top:490px" width="24" height="24" viewBox="0 0 24 24"><path d="M3.6 10v-1.5h8v9h8.3" fill="none" stroke="#111" stroke-width="1.2"/><path d="M3.6 12h6v9h10.3" fill="none" stroke="#111" stroke-width="1.2"/><rect x="4.2" y="11.2" width="2.6" height="2.6" fill="#fff" stroke="#1f2fd6" stroke-width="1"/><rect x="10.6" y="11.2" width="2.6" height="2.6" fill="#fff" stroke="#1f2fd6" stroke-width="1"/><rect x="10.6" y="19.95" width="2.6" height="2.6" fill="#fff" stroke="#1f2fd6" stroke-width="1"/><rect x="16.8" y="19.95" width="2.6" height="2.6" fill="#fff" stroke="#1f2fd6" stroke-width="1"/></svg>
<svg class="a" style="left:10px;top:512px" width="24" height="24" viewBox="0 0 24 24"><path d="M3.4 20.5C5 14 7 13 7.6 13.6S11 17.5 13.1 16.9 15.5 13.5 16.5 12.4" fill="none" stroke="#111" stroke-width="1.1"/><rect x="2.0999999999999996" y="19.2" width="2.6" height="2.6" fill="#fff" stroke="#1f2fd6" stroke-width="1"/><rect x="6.3" y="12.299999999999999" width="2.6" height="2.6" fill="#fff" stroke="#1f2fd6" stroke-width="1"/><rect x="11.799999999999999" y="15.599999999999998" width="2.6" height="2.6" fill="#fff" stroke="#1f2fd6" stroke-width="1"/><rect x="15.2" y="11.1" width="2.6" height="2.6" fill="#fff" stroke="#1f2fd6" stroke-width="1"/><path d="M15.5 22h5v-5z" fill="#6b6f76"/></svg>
<svg class="a" style="left:10px;top:533px" width="24" height="24" viewBox="0 0 24 24"><path d="M3 11.7H8.3L16 19.2V24.5" fill="none" stroke="#111" stroke-width="1.6"/><path d="M9 11.7H16.6V19" fill="none" stroke="#111" stroke-width="1" stroke-dasharray="1 1"/><path d="M17 25h3v-3.5z" fill="#6b6f76"/></svg>
<svg class="a" style="left:10px;top:555px" width="24" height="24" viewBox="0 0 24 24"><path d="M3 11.7H8.3Q13.5 12.5 16 19.2V24.5" fill="none" stroke="#111" stroke-width="1.6"/><path d="M9 11.7H16.6V19" fill="none" stroke="#111" stroke-width="1" stroke-dasharray="1 1"/><path d="M17 25h3v-3.5z" fill="#6b6f76"/></svg>
<svg class="a" style="left:10px;top:582px" width="24" height="24" viewBox="0 0 24 24"><rect x="3.8" y="8.8" width="13" height="9" fill="none" stroke="#111" stroke-width="1.3"/><rect x="15.5" y="7.500000000000001" width="2.6" height="2.6" fill="#fff" stroke="#1f2fd6" stroke-width="1"/><rect x="2.5" y="16.5" width="2.6" height="2.6" fill="#fff" stroke="#1f2fd6" stroke-width="1"/><path d="M16 21h5v-5z" fill="#6b6f76"/></svg>
<svg class="a" style="left:10px;top:603px" width="24" height="24" viewBox="0 0 24 24"><circle cx="9.5" cy="14" r="5.5" fill="none" stroke="#111" stroke-width="1.2"/><path d="M10 7.5h8v9h-8z" fill="none" stroke="#111" stroke-width="1.2"/><path d="M4 9.5h6" stroke="#18b030" stroke-width="1.6"/><path d="M3 9.5l3-2.5v5z" fill="#18b030"/></svg>
<svg class="a" style="left:10px;top:625px" width="24" height="24" viewBox="0 0 24 24"><path d="M2 15.4L12.4 6.2M4.5 17.5L14.5 8.5M7.2 19.6L16.3 11.5" stroke="#1a1f8a" stroke-width="1.1"/><path d="M15.5 21h5v-5z" fill="#6b6f76"/></svg>
<svg class="a" style="left:10px;top:647px" width="24" height="24" viewBox="0 0 24 24"><defs><pattern id="hp" width="2.6" height="2.6" patternUnits="userSpaceOnUse" patternTransform="rotate(-45)"><rect width="2.6" height="2.6" fill="#1a1f8a"/><rect width="1.1" height="2.6" fill="#fff"/></pattern></defs><rect x="3.3" y="7.2" width="8.5" height="8.5" fill="url(#hp)" stroke="#111" stroke-width="1.1"/><rect x="7.8" y="11.7" width="9.2" height="8.5" fill="url(#hp)" stroke="#111" stroke-width="1.1"/><path d="M15.5 21.5h5v-5z" fill="#6b6f76"/></svg>
<svg class="a" style="left:10px;top:671px" width="24" height="24" viewBox="0 0 24 24"><path d="M5 13l4 6 6-5-4-5z" fill="#fff" stroke="#555" stroke-width=".8"/><path d="M6 14l4 5M8 12.5l4 5" stroke="#8a8a8a" stroke-width=".7"/><path d="M11 12l8-8" stroke="#1f2fd6" stroke-width="2.6"/><path d="M9 13.5l3 3" stroke="#5ac8e8" stroke-width="2"/><circle cx="7" cy="9.5" r="2.6" fill="#f08a10"/><circle cx="7" cy="9.5" r="1.3" fill="#f8e040"/></svg>
<div class="a" style="left:15px;top:697px;width:14px;height:1px;background:#9ba1a9;box-shadow:0 1px 0 #fff"></div>
<svg class="a" style="left:10px;top:700px" width="24" height="24" viewBox="0 0 24 24"><path d="M7.5 5.5h10v7h-10z" fill="none" stroke="#8a8f96" stroke-width="1"/><path d="M12.5 6.5v5M10.5 9.5l2 2 2-2" fill="none" stroke="#8a8f96" stroke-width="1"/><path d="M5 17l4-3h8l3 3" fill="none" stroke="#8a8f96" stroke-width="1"/></svg>
<div class="a" style="left:40px;top:133px;width:700px;height:582px;background:#fff"></div>
<div class="a" style="left:38px;top:715px;width:700px;height:5px;background:linear-gradient(#dde2ea,#eef1f6 35%,#d9dfe8 70%,#bfc6d2)"></div>
<svg class="a" style="left:0;top:0" width="736" height="720"><g fill="none" stroke="#000" stroke-width="1" shape-rendering="crispEdges">
<path d="M98.5 141.3 C104.4 142.0 122.1 144.1 134.0 145.5 C145.9 146.9 159.0 148.8 170.0 150.0 C181.0 151.2 195.0 152.0 200.0 152.4 L387.5 152.5 C385.6 185.4 379.1 283.8 376.0 350.0 C372.9 416.2 370.2 503.3 369.0 550.0 C367.8 596.7 368.4 604.1 369.0 630.0 C369.6 655.9 372.0 692.9 372.6 705.5 C368.0 705.1 353.8 704.1 344.9 703.4 C336.0 702.7 327.6 702.0 319.0 701.1 C310.4 700.2 301.9 699.0 293.3 697.8 C284.7 696.6 276.0 695.3 267.4 693.9 C258.8 692.5 250.2 691.1 241.6 689.2 C233.0 687.3 224.4 685.2 215.8 682.3 C207.2 679.4 197.9 676.0 190.0 672.0 C182.1 668.0 175.4 663.4 168.5 658.6 C161.6 653.8 153.8 647.7 148.3 643.3 C142.9 638.9 139.6 635.9 135.8 632.2 C132.0 628.5 128.9 626.2 125.4 621.1 C121.9 616.0 118.0 608.9 115.0 601.7 C112.0 594.5 110.0 587.5 107.2 578.0 C104.5 568.5 100.8 555.0 98.5 545.0 C96.2 535.0 94.5 526.2 93.2 517.8 C91.9 509.4 91.4 502.6 90.7 494.5 C90.0 486.4 89.7 478.3 89.3 469.2 C88.9 460.1 88.5 451.5 88.2 440.0 C88.0 428.5 87.9 413.0 87.8 400.0 C87.7 387.0 87.6 378.7 87.8 362.0 C88.0 345.3 88.0 322.2 88.7 300.0 C89.4 277.8 90.6 255.3 92.2 228.9 C93.8 202.5 97.5 155.9 98.5 141.3Z"/><path d="M422.2 152 C434.7 152.9 474.8 155.8 497.3 157.2 C519.8 158.6 539.5 159.4 557.4 160.2 C575.3 161.0 589.6 161.7 604.6 161.9 C619.6 162.1 632.6 161.9 647.6 161.5 C662.6 161.1 684.1 159.9 694.8 159.3 C705.5 158.7 708.9 158.1 711.7 157.8 L711.7 371.7 C711.0 383.1 708.6 422.4 707.4 440.0 C706.2 457.6 705.7 465.0 704.4 477.5 C703.1 490.0 701.4 502.5 699.5 515.0 C697.6 527.5 696.0 540.0 693.1 552.5 C690.2 565.0 686.0 579.4 681.9 590.0 C677.8 600.6 674.0 608.1 668.7 616.2 C663.4 624.3 657.5 631.8 650.0 638.7 C642.5 645.6 633.1 651.5 623.7 657.5 C614.3 663.5 602.7 670.1 593.7 674.4 C584.8 678.7 579.2 680.5 570.0 683.1 C560.8 685.7 551.5 687.7 538.6 690.0 C525.7 692.3 507.8 695.1 492.4 697.0 C477.0 698.9 460.7 700.2 446.2 701.6 C431.7 703.0 412.0 704.9 405.2 705.5 C405.9 701.2 407.9 691.5 409.5 680.0 C411.1 668.5 413.5 654.8 415.0 636.8 C416.5 618.8 417.6 597.1 418.5 572.0 C419.4 546.9 420.2 514.7 420.7 486.0 C421.2 457.3 421.2 455.7 421.5 400.0 C421.8 344.3 422.1 193.3 422.2 152.0Z"/><path d="M690.3 186.5V365.3"/></g>
<path d="M386 185.5l3.5 3.5-3.5 3.5-3.5-3.5zM423 185.5l3.5 3.5-3.5 3.5-3.5-3.5z" fill="#e8100c"/></svg>
<svg class="a" style="left:0;top:0" width="736" height="720"><path d="M243.2 388.8 H246.6 V395.76 H243.2 ZM245.325 394.02 L246.6 396.195  M249.82 388.8 V395.76 H253.22 V388.8  M256.44 395.76 V390.54 L257.715 388.8 H258.565 L259.84 390.54 V395.76 M256.44 393.15 H259.84  M263.06 395.76 V388.8 L266.46 395.76 V388.8  M269.68 388.8 H273.08 M271.38 388.8 V395.76  M277.15 388.8 H278.85 M278 388.8 V395.76 M277.15 395.76 H278.85  M282.92 388.8 H286.32 M284.62 388.8 V395.76  M289.54 388.8 L291.24 392.28 L292.94 388.8 M291.24 392.28 V395.76  M297.86 390.54 v1.2 M297.86 394.02 v1.2  M310.25 390.105 L311.1 388.8 V395.76  M246.6 401 H243.2 V407.96 H246.6  M249.82 407.96 V402.74 L251.095 401 H251.945 L253.22 402.74 V407.96 M249.82 405.35 H253.22  M256.44 401 H259.84 M258.14 401 V407.96  M266.46 401 H263.06 V407.96 H266.46 M263.06 404.48 H265.61  M273.08 401 H269.68 V407.96 H273.08 V404.915 H271.38  M276.3 401 H279.7 V407.96 H276.3 Z M282.92 407.96 V401 H286.32 V404.48 H282.92 M284.62 404.48 L286.32 407.96  M289.54 401 L291.24 404.48 L292.94 401 M291.24 404.48 V407.96  M297.86 402.74 v1.2 M297.86 406.22 v1.2  M243.2 420.16 V414.94 L244.475 413.2 H245.325 L246.6 414.94 V420.16 M243.2 417.55 H246.6  M249.82 420.16 V413.2 L253.22 420.16 V413.2  M256.44 420.16 V413.2 L259.84 420.16 V413.2  M263.06 413.2 H266.46 V420.16 H263.06 Z M269.68 413.2 H273.08 M271.38 413.2 V420.16  M276.3 420.16 V414.94 L277.575 413.2 H278.425 L279.7 414.94 V420.16 M276.3 417.55 H279.7  M282.92 413.2 H286.32 M284.62 413.2 V420.16  M290.39 413.2 H292.09 M291.24 413.2 V420.16 M290.39 420.16 H292.09  M296.16 413.2 H299.56 V420.16 H296.16 Z M302.78 420.16 V413.2 L306.18 420.16 V413.2  M311.1 414.94 v1.2 M311.1 418.42 v1.2  M246.6 425.4 H243.2 V428.88 H246.6 V432.36 H243.2  M250.67 425.4 H252.37 M251.52 425.4 V432.36 M250.67 432.36 H252.37  M256.44 425.4 H259.84 L256.44 432.36 H259.84  M266.46 425.4 H263.06 V432.36 H266.46 M263.06 428.88 H265.61  M271.38 427.14 v1.2 M271.38 430.62 v1.2  M282.92 432.36 V427.14 L284.195 425.4 H285.045 L286.32 427.14 V432.36 M282.92 429.75 H286.32  M292.94 425.4 V432.36 M292.94 428.01 H289.54 V432.36 H292.94  M296.585 428.01 H299.56 V432.36 M299.56 430.185 H296.16 V432.36 H299.56  M302.78 432.36 V428.01 H306.18 V432.36 M304.48 428.01 V432.36  M309.4 433.23 H313.225  M316.87 426.705 L317.72 425.4 V432.36  M322.64 425.4 H326.04 V432.36 H322.64 Z M332.66 425.4 H329.26 V428.88 H332.66 V432.36 H329.26  M243.2 444.56 V437.6 H246.6 V441.08 H243.2  M250.67 437.6 H252.37 M251.52 437.6 V444.56 M250.67 444.56 H252.37  M259.84 437.6 H256.44 V444.56 H259.84 M256.44 441.08 H258.99  M266.46 437.6 H263.06 V444.56 H266.46  M273.08 437.6 H269.68 V444.56 H273.08 M269.68 441.08 H272.23  M282.92 444.56 V437.6 L286.32 444.56 V437.6  M289.54 444.56 V439.34 L290.815 437.6 H291.665 L292.94 439.34 V444.56 M289.54 441.95 H292.94  M296.16 444.56 V437.6 L297.86 441.08 L299.56 437.6 V444.56  M306.18 437.6 H302.78 V444.56 H306.18 M302.78 441.08 H305.33  M311.1 439.34 v1.2 M311.1 442.82 v1.2  M323.49 438.905 L324.34 437.6 V444.56  M569.2 396.6 H572.6 V403.56 H569.2 ZM571.325 401.82 L572.6 403.995  M575.82 396.6 V403.56 H579.22 V396.6  M582.44 403.56 V398.34 L583.715 396.6 H584.565 L585.84 398.34 V403.56 M582.44 400.95 H585.84  M589.06 403.56 V396.6 L592.46 403.56 V396.6  M595.68 396.6 H599.08 M597.38 396.6 V403.56  M603.15 396.6 H604.85 M604 396.6 V403.56 M603.15 403.56 H604.85  M608.92 396.6 H612.32 M610.62 396.6 V403.56  M615.54 396.6 L617.24 400.08 L618.94 396.6 M617.24 400.08 V403.56  M623.86 398.34 v1.2 M623.86 401.82 v1.2  M636.25 397.905 L637.1 396.6 V403.56  M572.6 408.8 H569.2 V415.76 H572.6  M575.82 415.76 V410.54 L577.095 408.8 H577.945 L579.22 410.54 V415.76 M575.82 413.15 H579.22  M582.44 408.8 H585.84 M584.14 408.8 V415.76  M592.46 408.8 H589.06 V415.76 H592.46 M589.06 412.28 H591.61  M599.08 408.8 H595.68 V415.76 H599.08 V412.715 H597.38  M602.3 408.8 H605.7 V415.76 H602.3 Z M608.92 415.76 V408.8 H612.32 V412.28 H608.92 M610.62 412.28 L612.32 415.76  M615.54 408.8 L617.24 412.28 L618.94 408.8 M617.24 412.28 V415.76  M623.86 410.54 v1.2 M623.86 414.02 v1.2  M569.2 427.96 V422.74 L570.475 421 H571.325 L572.6 422.74 V427.96 M569.2 425.35 H572.6  M575.82 427.96 V421 L579.22 427.96 V421  M582.44 427.96 V421 L585.84 427.96 V421  M589.06 421 H592.46 V427.96 H589.06 Z M595.68 421 H599.08 M597.38 421 V427.96  M602.3 427.96 V422.74 L603.575 421 H604.425 L605.7 422.74 V427.96 M602.3 425.35 H605.7  M608.92 421 H612.32 M610.62 421 V427.96  M616.39 421 H618.09 M617.24 421 V427.96 M616.39 427.96 H618.09  M622.16 421 H625.56 V427.96 H622.16 Z M628.78 427.96 V421 L632.18 427.96 V421  M637.1 422.74 v1.2 M637.1 426.22 v1.2  M572.6 433.2 H569.2 V436.68 H572.6 V440.16 H569.2  M576.67 433.2 H578.37 M577.52 433.2 V440.16 M576.67 440.16 H578.37  M582.44 433.2 H585.84 L582.44 440.16 H585.84  M592.46 433.2 H589.06 V440.16 H592.46 M589.06 436.68 H591.61  M597.38 434.94 v1.2 M597.38 438.42 v1.2  M608.92 440.16 V434.94 L610.195 433.2 H611.045 L612.32 434.94 V440.16 M608.92 437.55 H612.32  M618.94 433.2 V440.16 M618.94 435.81 H615.54 V440.16 H618.94  M622.585 435.81 H625.56 V440.16 M625.56 437.985 H622.16 V440.16 H625.56  M628.78 440.16 V435.81 H632.18 V440.16 M630.48 435.81 V440.16  M635.4 441.03 H639.225  M642.87 434.505 L643.72 433.2 V440.16  M648.64 433.2 H652.04 V440.16 H648.64 Z M658.66 433.2 H655.26 V436.68 H658.66 V440.16 H655.26  M569.2 452.36 V445.4 H572.6 V448.88 H569.2  M576.67 445.4 H578.37 M577.52 445.4 V452.36 M576.67 452.36 H578.37  M585.84 445.4 H582.44 V452.36 H585.84 M582.44 448.88 H584.99  M592.46 445.4 H589.06 V452.36 H592.46  M599.08 445.4 H595.68 V452.36 H599.08 M595.68 448.88 H598.23  M608.92 452.36 V445.4 L612.32 452.36 V445.4  M615.54 452.36 V447.14 L616.815 445.4 H617.665 L618.94 447.14 V452.36 M615.54 449.75 H618.94  M622.16 452.36 V445.4 L623.86 448.88 L625.56 445.4 V452.36  M632.18 445.4 H628.78 V452.36 H632.18 M628.78 448.88 H631.33  M637.1 447.14 v1.2 M637.1 450.62 v1.2  M648.64 445.4 H652.04 V452.36 H648.64 Z" fill="none" stroke="#3a3a3a" stroke-width=".85"/></svg>
<div class="a" style="left:136px;top:105px;width:126px;height:110px;background:rgba(0,0,0,.18);filter:blur(1.2px)"></div>
<div class="a" style="left:134px;top:102px;width:126px;height:111px;background:#fff;border:1px solid #9ea3aa;border-top-color:#7fb0e6"></div>
<div class="a" style="left:208px;top:140px;width:51px;height:18px;background:#3b94f0"></div>
<svg class="a" style="left:136px;top:104px" width="18" height="18" viewBox="0 0 18 18"><path d="M2 5.5V4.2A3.6 3.6 0 0 1 9.2 4.2V7.5" fill="none" stroke="#111" stroke-width="3.2"/><path d="M2 5.3V4.2A3.6 3.6 0 0 1 9.2 4.2V7.5" fill="none" stroke="#f4ee60" stroke-width="1.4"/><rect x="5" y="7.8" width="11.6" height="8.8" fill="#e8e628" stroke="#111" stroke-width="1.2"/><rect x="6.2" y="10" width="9.2" height="5.4" fill="#2f9e22"/><path d="M9.4 11.3h3.2L11 13.3z" fill="#111"/></svg>
<svg class="a" style="left:158px;top:105px" width="10" height="15" viewBox="0 0 10 15"><path d="M4.3 .6a3.8 3.8 0 0 1 3.8 3.8c0 2.6-1.7 3.6-1.9 6.2H2.4C2.2 8 .5 7 .5 4.4A3.8 3.8 0 0 1 4.3 .6z" fill="#f6ee60" stroke="#111" stroke-width="1.1"/><path d="M2.4 10.6h3.8v2.4l-.7.8H3.1l-.7-.8z" fill="#e6e6e6" stroke="#111" stroke-width=".9"/></svg>
<div class="a" style="left:174px;top:106px;width:12px;height:12px;background:#000"></div>
<svg class="a" style="left:189px;top:105px" width="18" height="15" viewBox="0 0 18 15"><path d="M5.5 .5h7.5l1.5 1.5-1 4H5z" fill="#fff" stroke="#111" stroke-width="1.1"/><path d="M7 2.3h5M7 3.9h5" stroke="#666" stroke-width=".8"/><path d="M2.5 6h13l1 1.5v5.5l-1 1.5h-13l-2-1.5V7.5z" fill="#cdc99a" stroke="#111" stroke-width="1.3"/><path d="M1 9.2h15.5M1 11.8h15.5" stroke="#1a1a1a" stroke-width="1.2"/><path d="M2.5 7.4h12.5" stroke="#f4f0c8" stroke-width="1"/></svg>
<div class="a" style="left:207.5px;top:106px;white-space:pre;font-size:11.7px;color:#1a1a1a">0 (0)</div>
<svg class="a" style="left:136px;top:122px" width="18" height="18" viewBox="0 0 18 18"><path d="M2 5.5V4.2A3.6 3.6 0 0 1 9.2 4.2V7.5" fill="none" stroke="#111" stroke-width="3.2"/><path d="M2 5.3V4.2A3.6 3.6 0 0 1 9.2 4.2V7.5" fill="none" stroke="#f4ee60" stroke-width="1.4"/><rect x="5" y="7.8" width="11.6" height="8.8" fill="#e8e628" stroke="#111" stroke-width="1.2"/><rect x="6.2" y="10" width="9.2" height="5.4" fill="#2f9e22"/><path d="M9.4 11.3h3.2L11 13.3z" fill="#111"/></svg>
<svg class="a" style="left:158px;top:123px" width="10" height="15" viewBox="0 0 10 15"><path d="M4.3 .6a3.8 3.8 0 0 1 3.8 3.8c0 2.6-1.7 3.6-1.9 6.2H2.4C2.2 8 .5 7 .5 4.4A3.8 3.8 0 0 1 4.3 .6z" fill="#f6ee60" stroke="#111" stroke-width="1.1"/><path d="M2.4 10.6h3.8v2.4l-.7.8H3.1l-.7-.8z" fill="#e6e6e6" stroke="#111" stroke-width=".9"/></svg>
<div class="a" style="left:174px;top:124px;width:12px;height:12px;background:#000"></div>
<svg class="a" style="left:189px;top:123px" width="18" height="15" viewBox="0 0 18 15"><path d="M5.5 .5h7.5l1.5 1.5-1 4H5z" fill="#fff" stroke="#111" stroke-width="1.1"/><path d="M7 2.3h5M7 3.9h5" stroke="#666" stroke-width=".8"/><path d="M2.5 6h13l1 1.5v5.5l-1 1.5h-13l-2-1.5V7.5z" fill="#cdc99a" stroke="#111" stroke-width="1.3"/><path d="M1 9.2h15.5M1 11.8h15.5" stroke="#1a1a1a" stroke-width="1.2"/><path d="M2.5 7.4h12.5" stroke="#f4f0c8" stroke-width="1"/></svg>
<div class="a" style="left:207.5px;top:124px;white-space:pre;font-size:11.7px;color:#1a1a1a">1 (1)</div>
<svg class="a" style="left:136px;top:140px" width="18" height="18" viewBox="0 0 18 18"><path d="M2 5.5V4.2A3.6 3.6 0 0 1 9.2 4.2V7.5" fill="none" stroke="#111" stroke-width="3.2"/><path d="M2 5.3V4.2A3.6 3.6 0 0 1 9.2 4.2V7.5" fill="none" stroke="#f4ee60" stroke-width="1.4"/><rect x="5" y="7.8" width="11.6" height="8.8" fill="#e8e628" stroke="#111" stroke-width="1.2"/><rect x="6.2" y="10" width="9.2" height="5.4" fill="#2f9e22"/><path d="M9.4 11.3h3.2L11 13.3z" fill="#111"/></svg>
<svg class="a" style="left:158px;top:141px" width="10" height="15" viewBox="0 0 10 15"><path d="M4.3 .6a3.8 3.8 0 0 1 3.8 3.8c0 2.6-1.7 3.6-1.9 6.2H2.4C2.2 8 .5 7 .5 4.4A3.8 3.8 0 0 1 4.3 .6z" fill="#f6ee60" stroke="#111" stroke-width="1.1"/><path d="M2.4 10.6h3.8v2.4l-.7.8H3.1l-.7-.8z" fill="#e6e6e6" stroke="#111" stroke-width=".9"/></svg>
<div class="a" style="left:174px;top:142px;width:12px;height:12px;background:#000"></div>
<svg class="a" style="left:189px;top:141px" width="18" height="15" viewBox="0 0 18 15"><path d="M5.5 .5h7.5l1.5 1.5-1 4H5z" fill="#fff" stroke="#111" stroke-width="1.1"/><path d="M7 2.3h5M7 3.9h5" stroke="#666" stroke-width=".8"/><path d="M2.5 6h13l1 1.5v5.5l-1 1.5h-13l-2-1.5V7.5z" fill="#cdc99a" stroke="#111" stroke-width="1.3"/><path d="M1 9.2h15.5M1 11.8h15.5" stroke="#1a1a1a" stroke-width="1.2"/><path d="M2.5 7.4h12.5" stroke="#f4f0c8" stroke-width="1"/></svg>
<div class="a" style="left:207.5px;top:142px;white-space:pre;font-size:11.7px;color:#fff">4 (2)</div>
<svg class="a" style="left:136px;top:158px" width="18" height="18" viewBox="0 0 18 18"><path d="M2 5.5V4.2A3.6 3.6 0 0 1 9.2 4.2V7.5" fill="none" stroke="#111" stroke-width="3.2"/><path d="M2 5.3V4.2A3.6 3.6 0 0 1 9.2 4.2V7.5" fill="none" stroke="#f4ee60" stroke-width="1.4"/><rect x="5" y="7.8" width="11.6" height="8.8" fill="#e8e628" stroke="#111" stroke-width="1.2"/><rect x="6.2" y="10" width="9.2" height="5.4" fill="#2f9e22"/><path d="M9.4 11.3h3.2L11 13.3z" fill="#111"/></svg>
<svg class="a" style="left:158px;top:159px" width="10" height="15" viewBox="0 0 10 15"><path d="M4.3 .6a3.8 3.8 0 0 1 3.8 3.8c0 2.6-1.7 3.6-1.9 6.2H2.4C2.2 8 .5 7 .5 4.4A3.8 3.8 0 0 1 4.3 .6z" fill="#7ec8d8" stroke="#111" stroke-width="1.1"/><path d="M2.4 10.6h3.8v2.4l-.7.8H3.1l-.7-.8z" fill="#e6e6e6" stroke="#111" stroke-width=".9"/></svg>
<div class="a" style="left:174px;top:160px;width:12px;height:12px;background:#000"></div>
<svg class="a" style="left:189px;top:159px" width="18" height="15" viewBox="0 0 18 15"><path d="M5.5 .5h7.5l1.5 1.5-1 4H5z" fill="#fff" stroke="#111" stroke-width="1.1"/><path d="M7 2.3h5M7 3.9h5" stroke="#666" stroke-width=".8"/><path d="M2.5 6h13l1 1.5v5.5l-1 1.5h-13l-2-1.5V7.5z" fill="#cdc99a" stroke="#111" stroke-width="1.3"/><path d="M1 9.2h15.5M1 11.8h15.5" stroke="#1a1a1a" stroke-width="1.2"/><path d="M2.5 7.4h12.5" stroke="#f4f0c8" stroke-width="1"/></svg>
<div class="a" style="left:207.5px;top:160px;white-space:pre;font-size:11.7px;color:#1a1a1a">2 (3)</div>
<svg class="a" style="left:136px;top:176px" width="18" height="18" viewBox="0 0 18 18"><path d="M2 5.5V4.2A3.6 3.6 0 0 1 9.2 4.2V7.5" fill="none" stroke="#111" stroke-width="3.2"/><path d="M2 5.3V4.2A3.6 3.6 0 0 1 9.2 4.2V7.5" fill="none" stroke="#f4ee60" stroke-width="1.4"/><rect x="5" y="7.8" width="11.6" height="8.8" fill="#e8e628" stroke="#111" stroke-width="1.2"/><rect x="6.2" y="10" width="9.2" height="5.4" fill="#2f9e22"/><path d="M9.4 11.3h3.2L11 13.3z" fill="#111"/></svg>
<svg class="a" style="left:158px;top:177px" width="10" height="15" viewBox="0 0 10 15"><path d="M4.3 .6a3.8 3.8 0 0 1 3.8 3.8c0 2.6-1.7 3.6-1.9 6.2H2.4C2.2 8 .5 7 .5 4.4A3.8 3.8 0 0 1 4.3 .6z" fill="#7ec8d8" stroke="#111" stroke-width="1.1"/><path d="M2.4 10.6h3.8v2.4l-.7.8H3.1l-.7-.8z" fill="#e6e6e6" stroke="#111" stroke-width=".9"/></svg>
<div class="a" style="left:174px;top:178px;width:12px;height:12px;background:#000"></div>
<svg class="a" style="left:189px;top:177px" width="18" height="15" viewBox="0 0 18 15"><path d="M5.5 .5h7.5l1.5 1.5-1 4H5z" fill="#fff" stroke="#111" stroke-width="1.1"/><path d="M7 2.3h5M7 3.9h5" stroke="#666" stroke-width=".8"/><path d="M2.5 6h13l1 1.5v5.5l-1 1.5h-13l-2-1.5V7.5z" fill="#cdc99a" stroke="#111" stroke-width="1.3"/><path d="M1 9.2h15.5M1 11.8h15.5" stroke="#1a1a1a" stroke-width="1.2"/><path d="M2.5 7.4h12.5" stroke="#f4f0c8" stroke-width="1"/></svg>
<div class="a" style="left:207.5px;top:178px;white-space:pre;font-size:11.7px;color:#1a1a1a">3 (4)</div>
<svg class="a" style="left:136px;top:194px" width="18" height="18" viewBox="0 0 18 18"><path d="M2 5.5V4.2A3.6 3.6 0 0 1 9.2 4.2V7.5" fill="none" stroke="#111" stroke-width="3.2"/><path d="M2 5.3V4.2A3.6 3.6 0 0 1 9.2 4.2V7.5" fill="none" stroke="#f4ee60" stroke-width="1.4"/><rect x="5" y="7.8" width="11.6" height="8.8" fill="#e8e628" stroke="#111" stroke-width="1.2"/><rect x="6.2" y="10" width="9.2" height="5.4" fill="#2f9e22"/><path d="M9.4 11.3h3.2L11 13.3z" fill="#111"/></svg>
<svg class="a" style="left:158px;top:195px" width="10" height="15" viewBox="0 0 10 15"><path d="M4.3 .6a3.8 3.8 0 0 1 3.8 3.8c0 2.6-1.7 3.6-1.9 6.2H2.4C2.2 8 .5 7 .5 4.4A3.8 3.8 0 0 1 4.3 .6z" fill="#f6ee60" stroke="#111" stroke-width="1.1"/><path d="M2.4 10.6h3.8v2.4l-.7.8H3.1l-.7-.8z" fill="#e6e6e6" stroke="#111" stroke-width=".9"/></svg>
<div class="a" style="left:174px;top:196px;width:12px;height:12px;background:#000"></div>
<svg class="a" style="left:189px;top:195px" width="18" height="15" viewBox="0 0 18 15"><path d="M5.5 .5h7.5l1.5 1.5-1 4H5z" fill="#fff" stroke="#111" stroke-width="1.1"/><path d="M7 2.3h5M7 3.9h5" stroke="#666" stroke-width=".8"/><path d="M2.5 6h13l1 1.5v5.5l-1 1.5h-13l-2-1.5V7.5z" fill="#cdc99a" stroke="#111" stroke-width="1.3"/><path d="M1 9.2h15.5M1 11.8h15.5" stroke="#1a1a1a" stroke-width="1.2"/><path d="M2.5 7.4h12.5" stroke="#f4f0c8" stroke-width="1"/></svg>
<div class="a" style="left:207.5px;top:196px;white-space:pre;font-size:11.7px;color:#1a1a1a">7 (5)</div>
<svg class="a" style="left:239px;top:150px" width="16" height="22" viewBox="0 0 16 22"><path d="M1.5 1.2v16l3.9-3.7 2.9 6.2 2.6-1.1-2.8-6h5.6z" fill="#fff" stroke="#111" stroke-width="1.1" stroke-linejoin="round"/></svg>
</body></html>
